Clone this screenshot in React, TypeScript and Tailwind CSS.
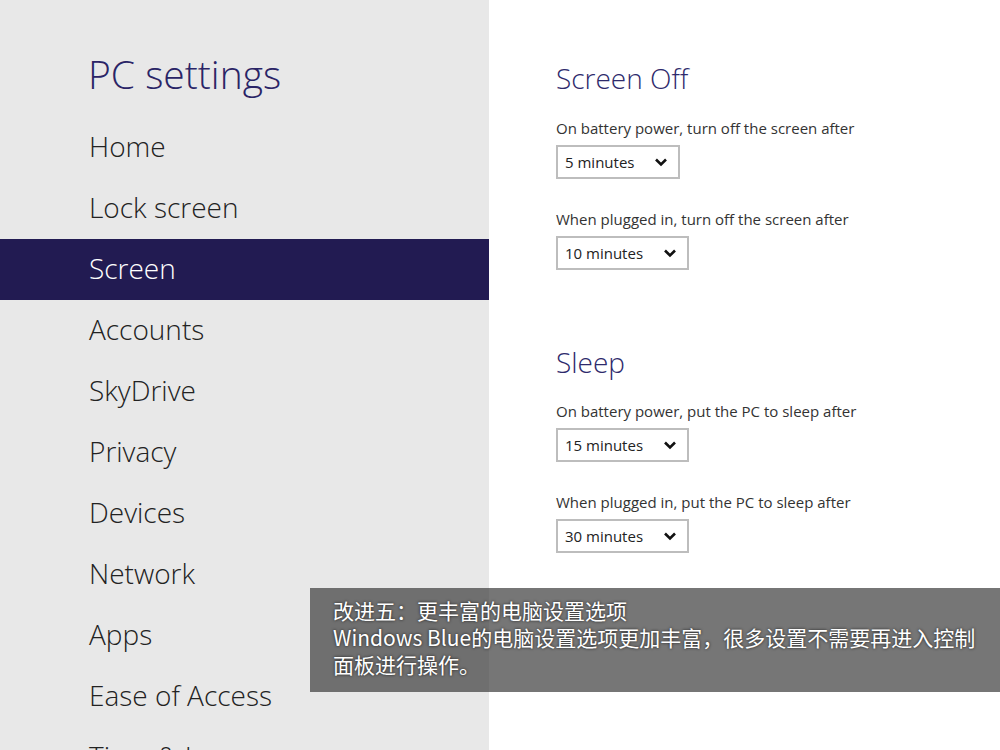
import React from "react";

const nav = [
  "Home",
  "Lock screen",
  "Screen",
  "Accounts",
  "SkyDrive",
  "Privacy",
  "Devices",
  "Network",
  "Apps",
  "Ease of Access",
  "Time & Language",
];

function Chevron() {
  return (
    <svg width="14" height="10" viewBox="0 0 14 10" className="shrink-0">
      <path d="M2 2.5 L7 7.5 L12 2.5" fill="none" stroke="#111" strokeWidth="2.6" />
    </svg>
  );
}

function Select({ value, width }: { value: string; width: string }) {
  return (
    <div
      className={`flex h-[34px] items-center justify-between border-2 border-[#bdbdbd] bg-white pl-[7px] pr-[10px] text-[15px] text-[#222] ${width}`}
    >
      <span>{value}</span>
      <Chevron />
    </div>
  );
}

function Field({ label, value, width }: { label: string; value: string; width: string }) {
  return (
    <div className="flex flex-col">
      <div className="h-[18px] text-[15px] leading-[18px] text-[#333]">{label}</div>
      <div className="mt-[8px]">
        <Select value={value} width={width} />
      </div>
    </div>
  );
}

export default function App() {
  const font = { fontFamily: '"Open Sans", "Noto Sans", sans-serif' };
  return (
    <div className="relative flex h-[750px] w-[1000px] overflow-hidden" style={font}>
      <div className="flex w-[489px] shrink-0 flex-col bg-[#e8e8e8]">
        <div className="h-[117px] shrink-0 pl-[88px] pt-[50px] text-[39px] font-light leading-[48px] text-[#2a2466]">
          PC settings
        </div>
        {nav.map((n) => (
          <div
            key={n}
            className={`flex h-[61px] shrink-0 items-center pb-[3px] pl-[89px] text-[28px] font-light ${
              n === "Screen" ? "bg-[#221b52] text-white" : "text-[#222]"
            }`}
          >
            {n}
          </div>
        ))}
      </div>
      <div className="flex flex-1 flex-col bg-white pl-[67px] pt-[58px]">
        <div className="text-[28px] font-light leading-[40px] text-[#2e2a6c]">Screen Off</div>
        <div className="mt-[21px] flex flex-col gap-[31px]">
          <Field label="On battery power, turn off the screen after" value="5 minutes" width="w-[124px]" />
          <Field label="When plugged in, turn off the screen after" value="10 minutes" width="w-[133px]" />
        </div>
        <div className="mt-[72px] text-[28px] font-light leading-[40px] text-[#2e2a6c]">Sleep</div>
        <div className="mt-[20px] flex flex-col gap-[31px]">
          <Field label="On battery power, put the PC to sleep after" value="15 minutes" width="w-[133px]" />
          <Field label="When plugged in, put the PC to sleep after" value="30 minutes" width="w-[133px]" />
        </div>
      </div>
      <div
        className="absolute left-[310px] top-[588px] h-[104px] w-[690px] bg-[rgba(60,60,60,0.7)] pl-[23px] pt-[9px] text-[21px] leading-[27px] text-white [text-shadow:0_0_3px_rgba(0,0,0,0.8)]"
        style={{ fontFamily: '"Noto Sans CJK SC", "Noto Sans", sans-serif' }}
      >
        <div>改进五：更丰富的电脑设置选项</div>
        <div>Windows Blue的电脑设置选项更加丰富，很多设置不需要再进入控制</div>
        <div>面板进行操作。</div>
      </div>
    </div>
  );
}
